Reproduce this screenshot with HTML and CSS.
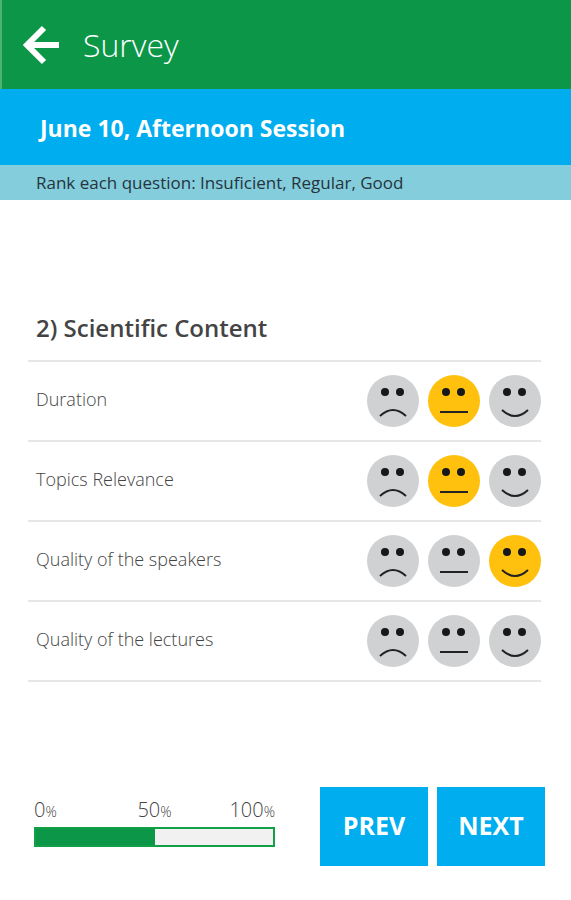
FILE: index.html
```html
<!DOCTYPE html>
<html lang="en">
<head>
  <meta charset="UTF-8">
  <meta name="viewport" content="width=device-width, initial-scale=1">
  <title>Survey</title>
  <link rel="stylesheet" href="styles.css">
</head>
<body>

  <!-- face shapes shared by all the questions -->
  <svg class="defs" aria-hidden="true">
    <symbol id="face-sad" viewBox="0 0 52 52">
      <circle class="skin" cx="26" cy="26" r="26" />
      <circle cx="18" cy="17" r="4" /><circle cx="33" cy="17" r="4" />
      <path class="mouth" d="M13 41 Q26 29 39 41" />
    </symbol>
    <symbol id="face-neutral" viewBox="0 0 52 52">
      <circle class="skin" cx="26" cy="26" r="26" />
      <circle cx="18" cy="17" r="4" /><circle cx="33" cy="17" r="4" />
      <path class="mouth" d="M12 37 H40" />
    </symbol>
    <symbol id="face-happy" viewBox="0 0 52 52">
      <circle class="skin" cx="26" cy="26" r="26" />
      <circle cx="18" cy="17" r="4" /><circle cx="33" cy="17" r="4" />
      <path class="mouth" d="M13 35 Q26 47 39 35" />
    </symbol>
  </svg>

  <header>
    <a href="#" class="back" aria-label="Back">
      <svg width="38" height="40" viewBox="0 0 38 40">
        <path d="M36 20 H5 M21 3 L4 20 L21 37" />
      </svg>
    </a>
    <h1>Survey</h1>
  </header>

  <h2 class="session">June 10, Afternoon Session</h2>
  <p class="hint">Rank each question: Insuficient, Regular, Good</p>

  <form>
    <main>
      <h3>2) Scientific Content</h3>

      <div class="question" role="radiogroup" aria-labelledby="q1">
        <span id="q1">Duration</span>
        <div class="faces">
          <label><input type="radio" name="duration" value="1" aria-label="Insuficient"><svg><use href="#face-sad" /></svg></label>
          <label><input type="radio" name="duration" value="2" aria-label="Regular" checked><svg><use href="#face-neutral" /></svg></label>
          <label><input type="radio" name="duration" value="3" aria-label="Good"><svg><use href="#face-happy" /></svg></label>
        </div>
      </div>

      <div class="question" role="radiogroup" aria-labelledby="q2">
        <span id="q2">Topics Relevance</span>
        <div class="faces">
          <label><input type="radio" name="topics" value="1" aria-label="Insuficient"><svg><use href="#face-sad" /></svg></label>
          <label><input type="radio" name="topics" value="2" aria-label="Regular" checked><svg><use href="#face-neutral" /></svg></label>
          <label><input type="radio" name="topics" value="3" aria-label="Good"><svg><use href="#face-happy" /></svg></label>
        </div>
      </div>

      <div class="question" role="radiogroup" aria-labelledby="q3">
        <span id="q3">Quality of the speakers</span>
        <div class="faces">
          <label><input type="radio" name="speakers" value="1" aria-label="Insuficient"><svg><use href="#face-sad" /></svg></label>
          <label><input type="radio" name="speakers" value="2" aria-label="Regular"><svg><use href="#face-neutral" /></svg></label>
          <label><input type="radio" name="speakers" value="3" aria-label="Good" checked><svg><use href="#face-happy" /></svg></label>
        </div>
      </div>

      <div class="question" role="radiogroup" aria-labelledby="q4">
        <span id="q4">Quality of the lectures</span>
        <div class="faces">
          <label><input type="radio" name="lectures" value="1" aria-label="Insuficient"><svg><use href="#face-sad" /></svg></label>
          <label><input type="radio" name="lectures" value="2" aria-label="Regular"><svg><use href="#face-neutral" /></svg></label>
          <label><input type="radio" name="lectures" value="3" aria-label="Good"><svg><use href="#face-happy" /></svg></label>
        </div>
      </div>
    </main>

    <footer>
      <div class="progress">
        <div class="scale">
          <span>0<small>%</small></span>
          <span>50<small>%</small></span>
          <span>100<small>%</small></span>
        </div>
        <progress value="50" max="100" aria-label="Survey progress"></progress>
      </div>
      <button type="button">PREV</button>
      <button type="button">NEXT</button>
    </footer>
  </form>

</body>
</html>
```

FILE: styles.css
```css
* {
  box-sizing: border-box;
}

body {
  margin: 0;
  font-family: "Open Sans", "Noto Sans", sans-serif;
  background-color: #fff;
  color: #444;
}

h1, h2, h3, p {
  margin: 0;
}

.defs {
  display: none;
}

header {
  display: flex;
  align-items: center;
  gap: 22px;
  height: 89px;
  padding-left: 21px;
  border-left: 2px solid #4fb274;
  background-color: #0c9648;
  color: white;
}

.back svg {
  display: block;
  fill: none;
  stroke: white;
  stroke-width: 6;
}

h1 {
  font-size: 32px;
  font-weight: 300;
}

.session {
  padding: 2px 40px 0;
  background-color: #00adef;
  color: white;
  font-size: 23px;
  font-weight: 700;
  line-height: 74px;
}

.hint {
  padding: 1px 36px 0;
  background-color: #84cddc;
  color: #26343c;
  font-size: 17px;
  line-height: 34px;
}

main {
  margin: 108px 30px 0 28px;
}

h3 {
  padding: 0 8px 12px;
  border-bottom: 2px solid #e6e6e6;
  font-size: 24px;
  font-weight: 600;
  line-height: 40px;
}

.question {
  display: flex;
  align-items: center;
  justify-content: space-between;
  height: 80px;
  padding-left: 8px;
  border-bottom: 2px solid #e6e6e6;
  font-size: 18px;
  font-weight: 300;
}

.question span {
  padding-bottom: 5px;
}

.faces {
  display: flex;
  gap: 9px;
}

.faces label {
  position: relative;
  cursor: pointer;
}

.faces input {
  position: absolute;
  inset: 0;
  width: 100%;
  height: 100%;
  margin: 0;
  opacity: 0;
}

.faces svg {
  display: block;
  width: 52px;
  height: 52px;
  color: #cfd1d3;
  fill: #16181a;
}

.faces input:checked + svg {
  color: #ffc10e;
}

.faces input:focus-visible + svg {
  outline: 2px solid #00adef;
}

.skin {
  fill: currentColor;
}

.mouth {
  fill: none;
  stroke: #222;
  stroke-width: 2;
}

footer {
  display: flex;
  align-items: flex-start;
  gap: 9px;
  margin: 105px 26px 34px 34px;
}

.progress {
  flex: 1;
  margin: 8px 36px 0 0;
}

.scale {
  display: grid;
  grid-template-columns: 1fr auto 1fr;
  font-size: 20px;
  font-weight: 300;
  line-height: 30px;
}

.scale span:last-child {
  text-align: right;
}

.scale small {
  font-size: 14px;
}

progress {
  -webkit-appearance: none;
  appearance: none;
  display: block;
  width: 100%;
  height: 20px;
  border: 2px solid #12a046;
}

progress::-webkit-progress-bar {
  background-color: #f1f1f1;
}

progress::-webkit-progress-value {
  background-color: #0c9648;
}

button {
  width: 108px;
  height: 79px;
  padding: 0 0 4px;
  border: none;
  background-color: #00adef;
  color: white;
  font-family: inherit;
  font-size: 25px;
  font-weight: 700;
  cursor: pointer;
}
```
